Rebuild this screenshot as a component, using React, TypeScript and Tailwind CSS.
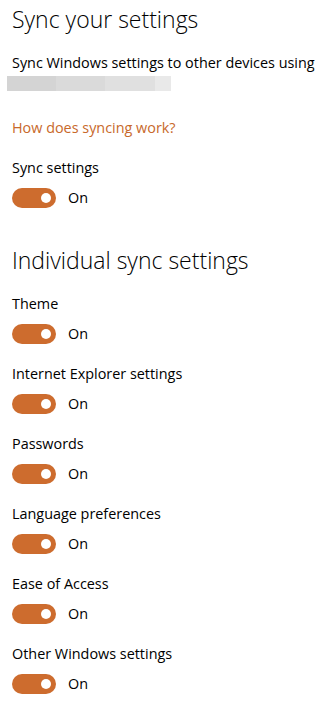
import { useState } from 'react';

const ITEMS = [
  'Theme',
  'Internet Explorer settings',
  'Passwords',
  'Language preferences',
  'Ease of Access',
  'Other Windows settings',
];

function Toggle({ on, onClick }: { on: boolean; onClick: () => void }) {
  return (
    <button onClick={onClick} className="flex items-center gap-3 h-5">
      <span
        className={`relative w-[44px] h-5 rounded-full ${on ? 'bg-[#cd6c2e]' : 'bg-white border-2 border-[#333]'}`}
      >
        <span
          className={`absolute top-[5px] w-[10px] h-[10px] rounded-full ${on ? 'right-[5px] bg-white' : 'left-[3px] top-[3px] bg-[#333]'}`}
        />
      </span>
      <span className="text-[14.4px] leading-5 text-black">{on ? 'On' : 'Off'}</span>
    </button>
  );
}

export default function App() {
  const [sync, setSync] = useState(true);
  const [items, setItems] = useState<Record<string, boolean>>(
    Object.fromEntries(ITEMS.map(i => [i, true]))
  );

  return (
    <div
      className="w-[329px] h-[714px] bg-white pl-3 pt-[4px] text-black overflow-hidden"
      style={{ fontFamily: '"Open Sans", "Noto Sans", sans-serif' }}
    >
      <h1 className="text-[23px] leading-[30px] font-light">Sync your settings</h1>
      <p className="mt-[19px] text-[14.4px] leading-5 whitespace-nowrap">
        Sync Windows settings to other devices using
      </p>
      {/* blurred account address */}
      <div className="-ml-[5px] mt-[3px] flex w-[164px] h-[15px]">
        <div className="w-[49px] bg-[#d4d4d4]" />
        <div className="w-[49px] bg-[#dadada]" />
        <div className="w-[50px] bg-[#e0e0e0]" />
        <div className="w-[16px] bg-[#e9e9e9]" />
      </div>

      <a href="#" className="block mt-[27px] text-[14.4px] leading-5 text-[#c8692b]">
        How does syncing work?
      </a>

      <div className="mt-[20px] text-[14.4px] leading-5">Sync settings</div>
      <div className="mt-[10px]">
        <Toggle on={sync} onClick={() => setSync(!sync)} />
      </div>

      <h2 className="mt-[37px] text-[23px] leading-[30px] font-light">Individual sync settings</h2>

      <div className="mt-[19px] flex flex-col gap-5">
        {ITEMS.map(item => (
          <div key={item}>
            <div className="text-[14.4px] leading-5">{item}</div>
            <div className="mt-[10px]">
              <Toggle on={items[item]} onClick={() => setItems(p => ({ ...p, [item]: !p[item] }))} />
            </div>
          </div>
        ))}
      </div>
    </div>
  );
}
